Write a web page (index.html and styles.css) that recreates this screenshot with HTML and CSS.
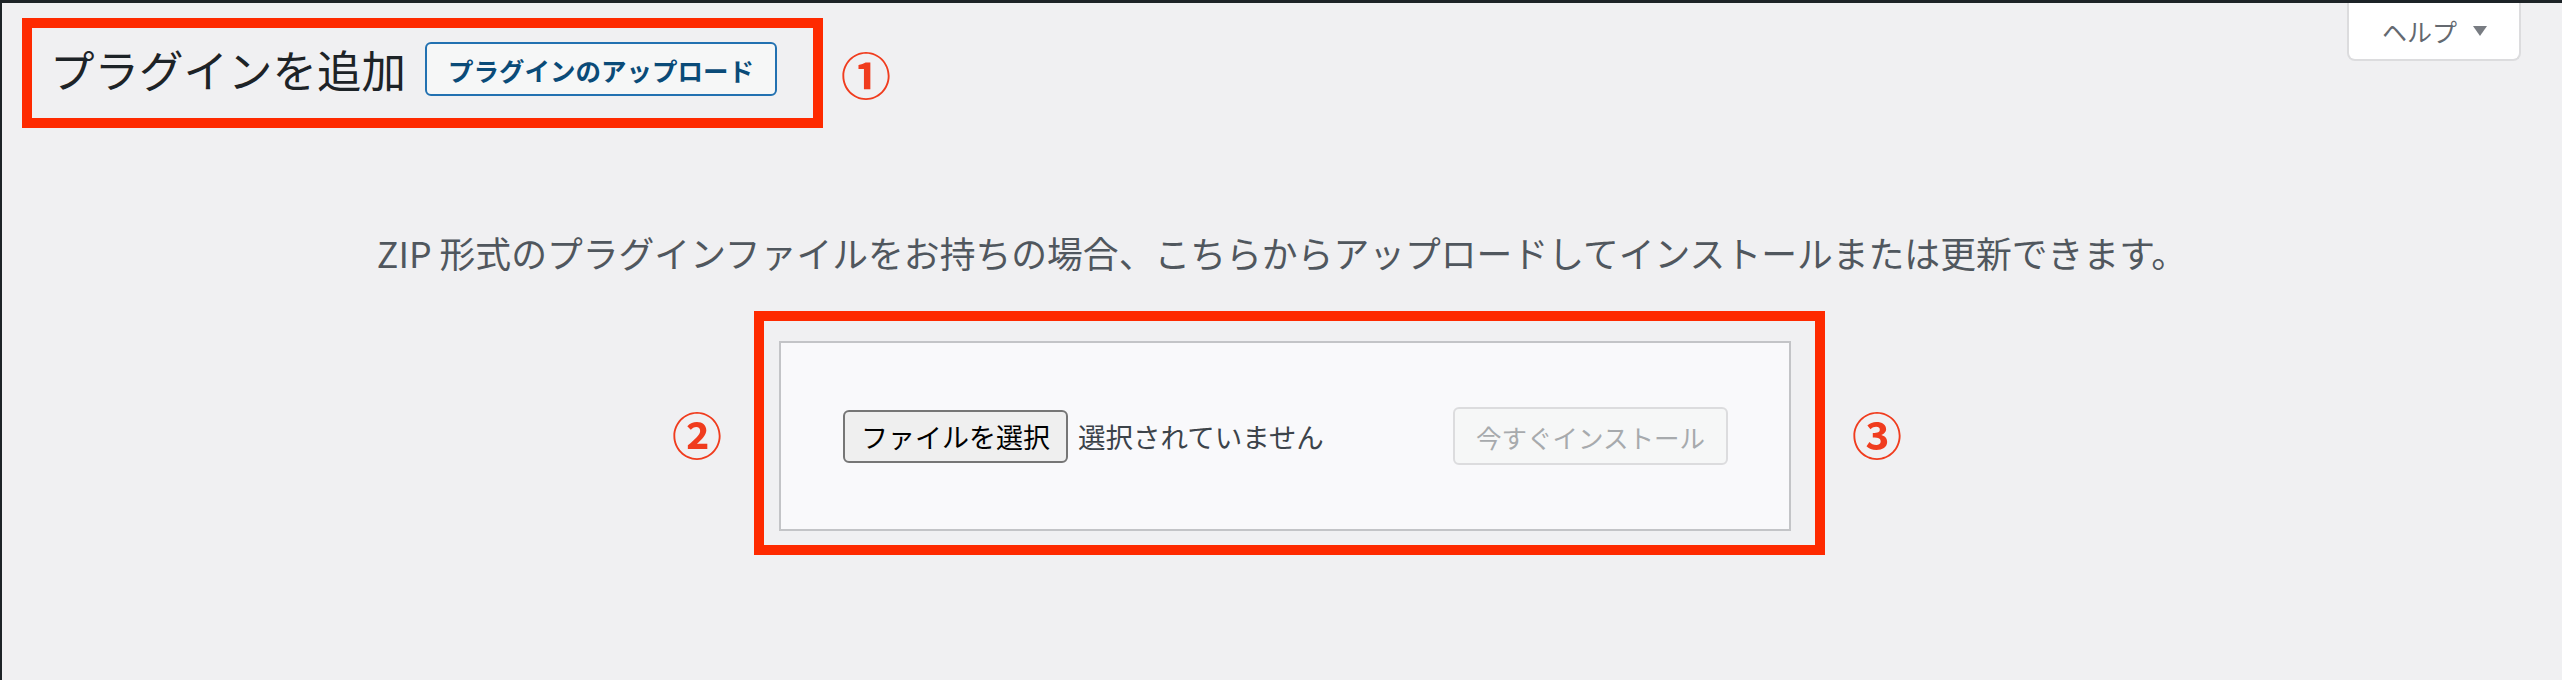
FILE: index.html
```html
<!DOCTYPE html>
<html lang="ja">
<head>
    <meta charset="UTF-8">
    <meta name="viewport" content="width=device-width, initial-scale=1.0">
    <title>プラグインを追加</title>
    <link rel="stylesheet" href="styles.css">
</head>
<body>
    <div class="header">
        <div class="header-left">
            <div class="callout callout-title">
                <div class="title-row">
                    <h1 class="page-title">プラグインを追加</h1>
                    <a href="#" class="upload-toggle">プラグインのアップロード</a>
                </div>
            </div>
            <span class="mark">①</span>
        </div>
        <button class="help-tab">
            <span>ヘルプ</span>
            <svg width="14" height="10" viewBox="0 0 14 10"><polygon points="0,0 14,0 7,10" fill="#787c82"/></svg>
        </button>
    </div>

    <p class="install-help">ZIP 形式のプラグインファイルをお持ちの場合、こちらからアップロードしてインストールまたは更新できます。</p>

    <div class="upload-row">
        <span class="mark mark-left">②</span>
        <div class="callout callout-form">
            <form class="upload-form">
                <div class="file-field">
                    <span class="file-button">ファイルを選択</span>
                    <span class="file-name">選択されていません</span>
                </div>
                <button type="button" class="install-button" disabled>今すぐインストール</button>
            </form>
        </div>
        <span class="mark mark-right">③</span>
    </div>
</body>
</html>
```

FILE: styles.css
```css
* {
    box-sizing: border-box;
}

html {
    background-color: #f0f0f2;
}

body {
    margin: 0;
    height: 680px;
    font-family: "Noto Sans CJK JP", "Noto Sans", sans-serif;
    background-color: #f0f0f2;
    border-top: 3px solid #1d2327;
    border-left: 2px solid #1d2327;
    color: #1d2327;
}

.header {
    display: flex;
    justify-content: space-between;
    align-items: flex-start;
    padding-right: 41px;
}

.header-left {
    display: flex;
    align-items: center;
    gap: 18px;
    margin: 15px 0 0 20px;
}

.callout {
    border: 10px solid #fe2a00;
}

.callout-title {
    padding: 14px 36px 22px 18px;
}

.title-row {
    display: flex;
    align-items: center;
    gap: 19px;
}

.page-title {
    margin: 0;
    font-size: 44.5px;
    font-weight: 400;
    line-height: 54px;
    color: #1d2327;
}

.upload-toggle {
    display: flex;
    align-items: center;
    justify-content: center;
    width: 352px;
    height: 54px;
    border: 2px solid #2271b1;
    border-radius: 6px;
    background-color: #f6f7f7;
    color: #0a4b78;
    font-size: 25.5px;
    font-weight: 700;
    text-decoration: none;
}

.mark {
    font-size: 50px;
    font-weight: 700;
    line-height: 1;
    color: #f03c1e;
}

.mark-left {
    margin-right: 32px;
}

.mark-right {
    margin-left: 27px;
}

.help-tab {
    display: flex;
    align-items: center;
    gap: 16px;
    height: 58px;
    padding: 0 32px 0 33px;
    border: 2px solid #dcdcde;
    border-top: none;
    border-radius: 0 0 8px 8px;
    background-color: #fff;
    color: #646970;
    font-family: inherit;
    font-size: 25px;
}

.install-help {
    margin: 99px 0 0;
    font-size: 35.8px;
    line-height: 50px;
    color: #50575e;
    text-align: center;
}

.upload-row {
    display: flex;
    justify-content: center;
    align-items: center;
    margin-top: 34px;
    padding-left: 10px;
}

.callout-form {
    padding: 20px 24px 14px 15px;
}

.upload-form {
    display: flex;
    justify-content: space-between;
    align-items: center;
    width: 1012px;
    height: 190px;
    padding: 0 61px 0 62px;
    border: 2px solid #c3c4c7;
    background-color: #f9f9fb;
}

.file-field {
    display: flex;
    align-items: center;
    gap: 10px;
}

.file-button {
    display: flex;
    align-items: center;
    justify-content: center;
    width: 225px;
    height: 53px;
    border: 2px solid #767676;
    border-radius: 6px;
    background-color: #efefef;
    color: #000;
    font-size: 27px;
}

.file-name {
    font-size: 27.5px;
    color: #3c434a;
}

.install-button {
    width: 275px;
    height: 58px;
    border: 2px solid #dcdcde;
    border-radius: 6px;
    background-color: #f6f7f7;
    color: #a7aaad;
    font-family: inherit;
    font-size: 25.5px;
}
```
